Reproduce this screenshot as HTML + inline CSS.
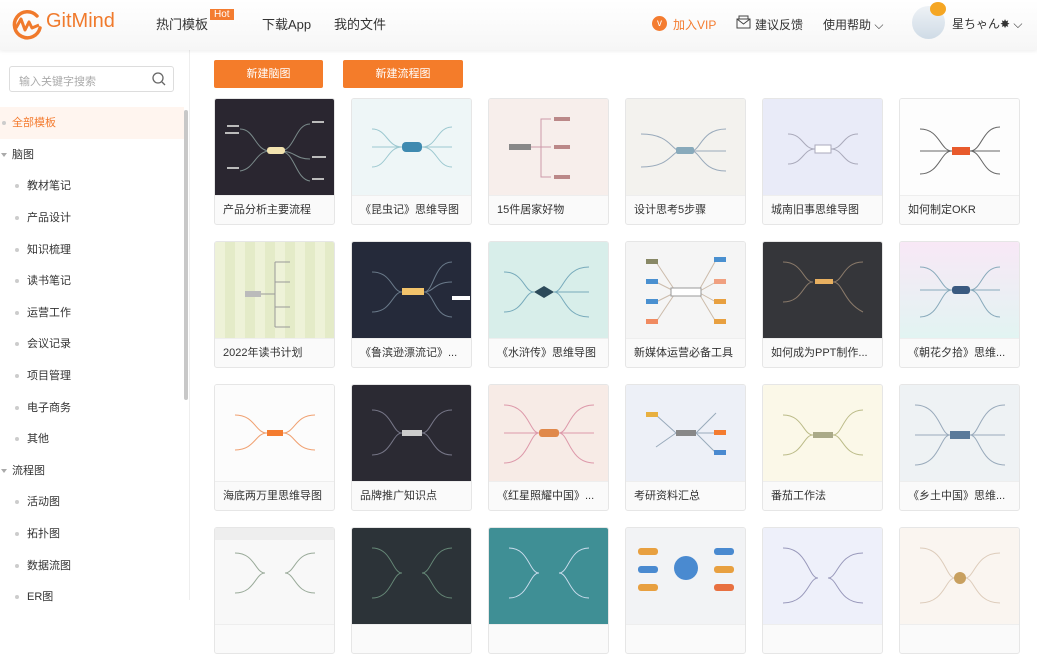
<!DOCTYPE html>
<html><head><meta charset="utf-8">
<style>
*{margin:0;padding:0;box-sizing:border-box}
body{width:1037px;height:600px;overflow:hidden;background:#fff;font-family:"Liberation Sans","Noto Sans CJK SC",sans-serif;color:#333;position:relative}
.hdr{position:absolute;left:0;top:0;width:1037px;height:50px;background:linear-gradient(#fff,#f6f6f6);box-shadow:0 1px 4px rgba(0,0,0,.08);z-index:2}
.logo{position:absolute;left:10px;top:8px}
.brand{position:absolute;left:46px;top:10px;font-size:20px;color:#f07a2c}
.nav{position:absolute;top:14px;font-size:13px;color:#333}
.hot{position:absolute;left:210px;top:9px;background:#f47c30;color:#fff;font-size:10px;padding:0 4px;line-height:11px}
.side{position:absolute;left:0;top:50px;width:190px;height:550px;border-right:1px solid #eee}
.search{position:absolute;left:9px;top:16px;width:165px;height:26px;border:1px solid #ddd;border-radius:3px;font-size:11px;color:#aaa;padding:6px 0 0 9px}
.it{position:absolute;left:0;width:184px;height:32px;font-size:11px;line-height:32px;color:#333}
.it.c{padding-left:27px}
.it.c:before{content:"";position:absolute;left:15px;top:14px;width:4px;height:4px;border-radius:2px;background:#ccc}
.it.p{padding-left:12px}
.it.p:before{content:"";position:absolute;left:1px;top:14px;border:3px solid transparent;border-top:4px solid #aaa}
.it.a{background:#fff5ef;color:#f47c30;padding-left:12px}
.it.a:before{content:"";position:absolute;left:2px;top:14px;width:4px;height:4px;border-radius:2px;background:#ccc}
.sb{position:absolute;left:184px;top:110px;width:4px;height:290px;background:#c8c8c8;border-radius:2px}
.btn{position:absolute;top:60px;height:28px;background:#f47c2a;color:#fff;font-size:11px;line-height:28px;text-align:center;border-radius:2px}
.card{position:absolute;width:121px;height:127px;border:1px solid #e6e6e6;border-radius:3px;overflow:hidden;background:#fafafa}
.card .im{height:97px;border-bottom:1px solid #eee;position:relative}
.card .t{font-size:11px;line-height:28px;padding-left:8px;color:#333;white-space:nowrap}
.card svg{position:absolute;left:0;top:0}
</style></head><body>
<div class="hdr">
<svg class="logo" width="34" height="34" viewBox="0 0 34 34"><path d="M27 8A13 13 0 1 0 30 20" fill="none" stroke="#f07a2c" stroke-width="3.5" stroke-linecap="round"/><path d="M6 20L11 11L15 22L19 14L22 20L29 17" fill="none" stroke="#f07a2c" stroke-width="3" stroke-linejoin="round"/></svg>
<div class="brand">GitMind</div>
<div class="nav" style="left:156px">热门模板</div><div class="hot">Hot</div>
<div class="nav" style="left:262px">下载App</div>
<div class="nav" style="left:334px">我的文件</div>
<div style="position:absolute;left:652px;top:16px;width:15px;height:15px;border-radius:50%;background:#f47c30;color:#fff;font-size:10px;text-align:center;line-height:15px">v</div>
<div class="nav" style="left:673px;top:16px;font-size:12px;color:#f47c30">加入VIP</div>
<svg style="position:absolute;left:736px;top:15px" width="15" height="14"><rect x="1" y="4" width="13" height="9" fill="none" stroke="#444"/><path d="M1 4l6.5 5 6.5-5M3 4V1h9v3" fill="none" stroke="#444"/></svg>
<div class="nav" style="left:755px;top:16px;font-size:12px">建议反馈</div>
<div class="nav" style="left:823px;top:16px;font-size:12px">使用帮助 ⌵</div>
<div style="position:absolute;left:912px;top:6px;width:33px;height:33px;border-radius:50%;background:linear-gradient(#eef2f6,#cfdbe6)"></div>
<div style="position:absolute;left:930px;top:2px;width:16px;height:14px;border-radius:50%;background:#f5a623"></div>
<div class="nav" style="left:952px;top:15px;font-size:12px">星ちゃん✸ ⌵</div>
</div>
<div class="side">
<div class="search">输入关键字搜索<svg style="position:absolute;right:7px;top:5px" width="14" height="14"><circle cx="6" cy="6" r="5" fill="none" stroke="#666" stroke-width="1.3"/><path d="M10 10l3 3" stroke="#666" stroke-width="1.3"/></svg></div>
<div class="it a" style="top:57px">全部模板</div>
<div class="it p" style="top:89px">脑图</div>
<div class="it c" style="top:120px">教材笔记</div>
<div class="it c" style="top:152px">产品设计</div>
<div class="it c" style="top:184px">知识梳理</div>
<div class="it c" style="top:215px">读书笔记</div>
<div class="it c" style="top:247px">运营工作</div>
<div class="it c" style="top:278px">会议记录</div>
<div class="it c" style="top:310px">项目管理</div>
<div class="it c" style="top:342px">电子商务</div>
<div class="it c" style="top:373px">其他</div>
<div class="it p" style="top:405px">流程图</div>
<div class="it c" style="top:436px">活动图</div>
<div class="it c" style="top:468px">拓扑图</div>
<div class="it c" style="top:500px">数据流图</div>
<div class="it c" style="top:531px">ER图</div>
</div>
<div class="sb"></div>
<div class="btn" style="left:214px;width:109px">新建脑图</div>
<div class="btn" style="left:343px;width:120px">新建流程图</div>

<div class="card" style="left:214px;top:98px"><div class="im" style="background:#2a2630"><svg width="121" height="97"><g stroke="#7a8a8a" fill="none"><path d="M55 52C40 52 40 30 25 30M55 52C40 52 40 70 25 72M65 52C80 52 80 25 95 25M65 52C80 52 80 60 95 60M65 52C80 52 80 80 95 82"/></g><rect x="52" y="48" width="18" height="7" rx="3" fill="#f3e3b0"/><g fill="#bbb"><rect x="12" y="26" width="12" height="2"/><rect x="10" y="33" width="14" height="2"/><rect x="12" y="68" width="12" height="2"/><rect x="97" y="22" width="12" height="2"/><rect x="97" y="57" width="14" height="2"/><rect x="97" y="79" width="12" height="2"/></g></svg></div><div class="t">产品分析主要流程</div></div>
<div class="card" style="left:351px;top:98px"><div class="im" style="background:#eef6f7"><svg width="121" height="97"><g stroke="#9cc8d0" fill="none"><path d="M50 48C35 48 35 30 20 30M50 48H20M50 48C35 48 35 68 20 68M70 48C85 48 85 28 100 28M70 48H100M70 48C85 48 85 68 100 68"/></g><rect x="50" y="43" width="20" height="10" rx="4" fill="#3f8ab0"/></svg></div><div class="t">《昆虫记》思维导图</div></div>
<div class="card" style="left:488px;top:98px"><div class="im" style="background:#f7eeeb"><svg width="121" height="97"><g stroke="#c9a" fill="none"><path d="M42 48H52V20H62M52 48H62M52 48V78H62"/></g><rect x="20" y="45" width="22" height="6" fill="#888"/><g fill="#b88"><rect x="65" y="18" width="16" height="4"/><rect x="65" y="46" width="16" height="4"/><rect x="65" y="76" width="16" height="4"/></g></svg></div><div class="t">15件居家好物</div></div>
<div class="card" style="left:625px;top:98px"><div class="im" style="background:#f3f2ee"><svg width="121" height="97"><g stroke="#9ab" fill="none"><path d="M55 52C45 52 45 35 15 35M55 52C45 52 45 68 15 68M65 52C75 52 75 30 100 30M65 52H100M65 52C75 52 75 72 100 72"/></g><rect x="50" y="48" width="18" height="7" rx="2" fill="#8ab"/></svg></div><div class="t">设计思考5步骤</div></div>
<div class="card" style="left:762px;top:98px"><div class="im" style="background:#e9ebf8"><svg width="121" height="97"><g stroke="#aab" fill="none"><path d="M52 50C40 50 40 35 25 35M52 50C40 50 40 65 25 65M68 50C80 50 80 35 95 35M68 50C80 50 80 65 95 65"/></g><rect x="52" y="46" width="16" height="8" fill="#fff" stroke="#aab"/></svg></div><div class="t">城南旧事思维导图</div></div>
<div class="card" style="left:899px;top:98px"><div class="im" style="background:#fdfdfd"><svg width="121" height="97"><g stroke="#666" fill="none"><path d="M52 52C40 52 40 30 20 30M52 52H20M52 52C40 52 40 75 20 75M70 52C82 52 82 28 100 28M70 52H100M70 52C82 52 82 75 100 75"/></g><rect x="52" y="48" width="18" height="8" fill="#e85a2c"/></svg></div><div class="t">如何制定OKR</div></div>

<div class="card" style="left:214px;top:241px"><div class="im" style="background:repeating-linear-gradient(90deg,#eef2d8 0 10px,#e4ebc8 10px 20px)"><svg width="121" height="97"><g stroke="#999" fill="none"><path d="M45 52H60M60 20V85M60 20H75M60 40H75M60 65H75M60 85H75"/></g><rect x="30" y="49" width="16" height="6" fill="#bbb"/></svg></div><div class="t">2022年读书计划</div></div>
<div class="card" style="left:351px;top:241px"><div class="im" style="background:#252a3a"><svg width="121" height="97"><g stroke="#6a7a8a" fill="none"><path d="M50 50C40 50 40 30 20 30M50 50C40 50 40 70 20 70M72 50C82 50 82 20 100 20M72 50C82 50 82 40 100 40M72 50C82 50 82 75 100 75"/></g><rect x="50" y="46" width="22" height="7" fill="#f2c36b"/><rect x="100" y="54" width="18" height="4" fill="#fff"/></svg></div><div class="t">《鲁滨逊漂流记》...</div></div>
<div class="card" style="left:488px;top:241px"><div class="im" style="background:#d8eeea"><svg width="121" height="97"><g stroke="#7ab" fill="none"><path d="M45 50C35 50 35 30 15 30M45 50C35 50 35 70 15 70M65 50C75 50 75 25 100 25M65 50C75 50 75 50 100 50M65 50C75 50 75 75 100 75"/></g><path d="M45 50l10-6 10 6-10 6z" fill="#2c4a5a"/></svg></div><div class="t">《水浒传》思维导图</div></div>
<div class="card" style="left:625px;top:241px"><div class="im" style="background:#f5f5f5"><svg width="121" height="97"><g stroke="#cba" fill="none"><path d="M50 50L30 20M50 50L30 40M50 50L30 60M50 50L30 80M72 50L90 18M72 50L90 40M72 50L90 60M72 50L90 80"/></g><rect x="45" y="46" width="30" height="8" fill="#fff" stroke="#999"/><g><rect x="20" y="17" width="12" height="5" fill="#886"/><rect x="20" y="37" width="12" height="5" fill="#4a90d0"/><rect x="20" y="57" width="12" height="5" fill="#4a90d0"/><rect x="20" y="77" width="12" height="5" fill="#f08a60"/><rect x="88" y="15" width="12" height="5" fill="#4a90d0"/><rect x="88" y="37" width="12" height="5" fill="#f0a080"/><rect x="88" y="57" width="12" height="5" fill="#e8a040"/><rect x="88" y="77" width="12" height="5" fill="#e8a040"/></g></svg></div><div class="t">新媒体运营必备工具</div></div>
<div class="card" style="left:762px;top:241px"><div class="im" style="background:#35363a"><svg width="121" height="97"><g stroke="#8a7a6a" fill="none"><path d="M50 40C40 40 40 20 20 20M50 40C40 40 40 60 20 60M70 40C80 40 80 20 100 20M70 40C80 40 80 60 100 70"/></g><rect x="52" y="37" width="18" height="5" fill="#e8b060"/></svg></div><div class="t">如何成为PPT制作...</div></div>
<div class="card" style="left:899px;top:241px"><div class="im" style="background:linear-gradient(#f8e8f6,#e2f4f2)"><svg width="121" height="97"><g stroke="#8ab" fill="none"><path d="M52 48C40 48 40 25 20 25M52 48H20M52 48C40 48 40 75 20 75M70 48C82 48 82 25 100 25M70 48H100M70 48C82 48 82 75 100 75"/></g><rect x="52" y="44" width="18" height="8" rx="3" fill="#3a5a80"/></svg></div><div class="t">《朝花夕拾》思维...</div></div>

<div class="card" style="left:214px;top:384px"><div class="im" style="background:#fcfcfc"><svg width="121" height="97"><g stroke="#f0a070" fill="none"><path d="M52 48C40 48 40 30 20 30M52 48C40 48 40 65 20 65M68 48C80 48 80 30 100 30M68 48C80 48 80 65 100 65"/></g><rect x="52" y="45" width="16" height="6" fill="#f47c30"/></svg></div><div class="t">海底两万里思维导图</div></div>
<div class="card" style="left:351px;top:384px"><div class="im" style="background:#2b2a33"><svg width="121" height="97"><g stroke="#778" fill="none"><path d="M50 48C40 48 40 25 20 25M50 48C40 48 40 70 20 70M70 48C80 48 80 25 100 25M70 48C80 48 80 70 100 70"/></g><rect x="50" y="45" width="20" height="6" fill="#ccc"/></svg></div><div class="t">品牌推广知识点</div></div>
<div class="card" style="left:488px;top:384px"><div class="im" style="background:#f7ebe6"><svg width="121" height="97"><g stroke="#d9a" fill="none"><path d="M50 48C40 48 40 20 15 20M50 48H15M50 48C40 48 40 78 15 78M70 48C80 48 80 20 105 20M70 48H105M70 48C80 48 80 78 105 78"/></g><rect x="50" y="44" width="20" height="8" rx="3" fill="#e0884a"/></svg></div><div class="t">《红星照耀中国》...</div></div>
<div class="card" style="left:625px;top:384px"><div class="im" style="background:#edf0f7"><svg width="121" height="97"><g stroke="#9ab" fill="none"><path d="M50 48L30 30M50 48L30 62M70 48L90 28M70 48L90 48M70 48L90 68"/></g><rect x="50" y="45" width="20" height="6" fill="#888"/><rect x="20" y="27" width="12" height="5" fill="#e8b040"/><rect x="88" y="45" width="12" height="5" fill="#f47c30"/><rect x="88" y="65" width="12" height="5" fill="#4a8ad0"/></svg></div><div class="t">考研资料汇总</div></div>
<div class="card" style="left:762px;top:384px"><div class="im" style="background:#fbf8e8"><svg width="121" height="97"><g stroke="#bb8" fill="none"><path d="M50 50C40 50 40 30 20 30M50 50C40 50 40 70 20 70M70 50C80 50 80 25 100 25M70 50C80 50 80 70 100 70"/></g><rect x="50" y="47" width="20" height="6" fill="#aa8"/></svg></div><div class="t">番茄工作法</div></div>
<div class="card" style="left:899px;top:384px"><div class="im" style="background:#eef2f4"><svg width="121" height="97"><g stroke="#9ab" fill="none"><path d="M50 50C40 50 40 20 15 20M50 50H15M50 50C40 50 40 80 15 80M70 50C80 50 80 20 105 20M70 50H105M70 50C80 50 80 80 105 80"/></g><rect x="50" y="46" width="20" height="8" fill="#5a7a9a"/></svg></div><div class="t">《乡土中国》思维...</div></div>

<div class="card" style="left:214px;top:527px"><div class="im" style="background:#f8f8f8"><svg width="121" height="97"><g stroke="#9a9" fill="none"><path d="M50 45C40 45 40 25 20 25M50 45C40 45 40 65 20 65M70 45C80 45 80 25 100 25M70 45C80 45 80 65 100 65"/></g><rect x="0" y="0" width="121" height="12" fill="#eee"/></svg></div><div class="t"></div></div>
<div class="card" style="left:351px;top:527px"><div class="im" style="background:#2c3338"><svg width="121" height="97"><g stroke="#687" fill="none"><path d="M50 45C40 45 40 20 20 20M50 45C40 45 40 70 20 70M70 45C80 45 80 20 100 20M70 45C80 45 80 70 100 70"/></g></svg></div><div class="t"></div></div>
<div class="card" style="left:488px;top:527px"><div class="im" style="background:#3f8f95"><svg width="121" height="97"><g stroke="#cde" fill="none"><path d="M50 45C40 45 40 20 20 20M50 45C40 45 40 70 20 70M70 45C80 45 80 20 100 20M70 45C80 45 80 70 100 70"/></g></svg></div><div class="t"></div></div>
<div class="card" style="left:625px;top:527px"><div class="im" style="background:#f2f3f5"><svg width="121" height="97"><rect x="12" y="20" width="20" height="7" rx="3" fill="#e8a040"/><rect x="12" y="38" width="20" height="7" rx="3" fill="#4a8ad0"/><rect x="12" y="56" width="20" height="7" rx="3" fill="#e8a040"/><rect x="88" y="20" width="20" height="7" rx="3" fill="#4a8ad0"/><rect x="88" y="38" width="20" height="7" rx="3" fill="#e8a040"/><rect x="88" y="56" width="20" height="7" rx="3" fill="#e87040"/><circle cx="60" cy="40" r="12" fill="#4a8ad0"/></svg></div><div class="t"></div></div>
<div class="card" style="left:762px;top:527px"><div class="im" style="background:#eef0fa"><svg width="121" height="97"><g stroke="#99b" fill="none"><path d="M55 50C45 50 45 20 20 20M55 50C45 50 45 75 20 75M65 50C75 50 75 25 100 25M65 50C75 50 75 75 100 75"/></g></svg></div><div class="t"></div></div>
<div class="card" style="left:899px;top:527px"><div class="im" style="background:#faf5f0"><svg width="121" height="97"><g stroke="#dcb" fill="none"><path d="M55 50C45 50 45 20 20 20M55 50C45 50 45 75 20 75M65 50C75 50 75 25 100 25M65 50C75 50 75 75 100 75"/></g><circle cx="60" cy="50" r="6" fill="#c8a060"/></svg></div><div class="t"></div></div>
</body></html>
